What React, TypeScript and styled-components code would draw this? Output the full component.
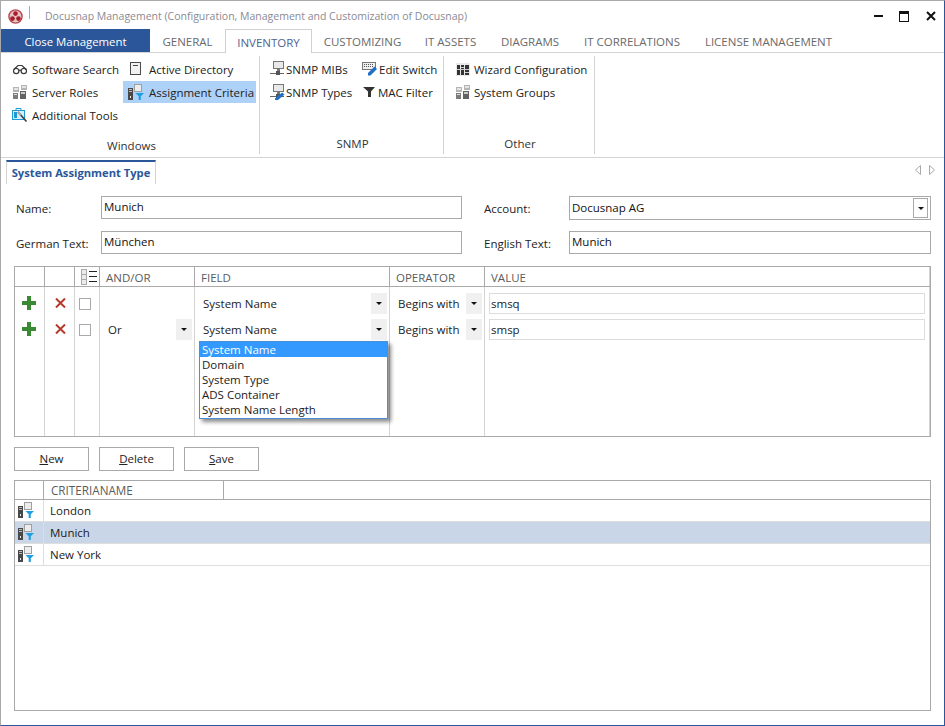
import React from "react";
import styled, { createGlobalStyle } from "styled-components";

const Global = createGlobalStyle`
  html, body { margin: 0; padding: 0; background: #fff; }
  body { font-family: "Open Sans", "Noto Sans", "Liberation Sans", sans-serif; font-size: 11.5px; color: #1a1a1a; }
  * { box-sizing: border-box; }
`;

const Window = styled.div`
  width: 945px; height: 726px; display: flex; flex-direction: column; background: #fff;
  border-top: 1px solid #a9a9a9; border-left: 1px solid #a9a9a9;
  border-right: 1px solid #2b579a; border-bottom: 1px solid #2b579a; overflow: hidden;
`;
const TitleBar = styled.header`
  height: 28px; flex: none; display: flex; align-items: center; padding: 0 8px 0 7px;
`;
const TitleDivider = styled.span`
  width: 1px; height: 13px; background: #a9a9a9; margin: -6px 15px 0 6px;
`;
const TitleText = styled.span`
  color: #8a8a94; font-size: 10.5px; margin-top: 1px;
`;
const WindowControls = styled.div`
  margin-left: auto; display: grid; grid-template-columns: 25px 27px 10px; align-items: center; margin-top: 2px;
`;
const TabBar = styled.nav`
  height: 24px; flex: none; display: flex; border-bottom: 1px solid #d4d4d4;
`;
const CloseTab = styled.button`
  width: 149px; height: 23px; border: 0; background: #2b579a; color: #fff;
  font: inherit; font-size: 11.4px; padding: 1px 0 0;
`;
const Tab = styled.div<{ $w: number; $active?: boolean }>`
  width: ${(p) => p.$w}px; height: ${(p) => (p.$active ? 24 : 23)}px; display: flex; align-items: center; justify-content: center;
  font-size: 11.5px; color: ${(p) => (p.$active ? "#4f6490" : "#6a6a6a")}; background: #fff; padding-top: 2px;
  ${(p) => (p.$active ? "border: 1px solid #d0d0d0; border-bottom: 0;" : "")}
`;
const Ribbon = styled.section`
  height: 105px; flex: none; display: flex; border-bottom: 1px solid #d4d4d4; padding-bottom: 3px;
`;
const Group = styled.div<{ $w: number; $pad: number; $labelPad: number }>`
  width: ${(p) => p.$w}px; display: flex; flex-direction: column; border-right: 1px solid #d4d4d4;
  padding: 2px 0 ${(p) => p.$labelPad}px ${(p) => p.$pad}px; margin-top: 3px;
`;
const GroupGrid = styled.div<{ $cols: string }>`
  display: grid; grid-template-columns: ${(p) => p.$cols}; grid-auto-rows: 23px; justify-content: start;
`;
const GroupLabel = styled.div<{ $shift: number }>`
  margin-top: auto; text-align: center; color: #333; font-size: 11.5px; margin-left: ${(p) => p.$shift}px; line-height: 16px;
`;
const RibbonItem = styled.div<{ $gap: number; $active?: boolean }>`
  display: flex; align-items: center; gap: ${(p) => p.$gap}px; padding-left: 5px; padding-right: 2px;
  background: ${(p) => (p.$active ? "#aed1f8" : "transparent")}; white-space: nowrap; color: #222; height: 22px; font-size: 11.5px;
`;
const DocStrip = styled.div`
  height: 26px; flex: none; display: flex; align-items: flex-start; padding: 2px 8px 0 5px; justify-content: space-between;
`;
const DocTab = styled.div`
  width: 150px; height: 24px; border: 1px solid #d4d4d4; border-bottom: 0; border-top: 2px solid #2b579a;
  display: flex; align-items: center; justify-content: center; color: #2b579a; font-weight: 700; font-size: 11.2px; padding-bottom: 2px;
`;
const DocArrows = styled.div`
  display: flex; gap: 8px; margin-top: 5px; margin-right: 1px;
`;
const Content = styled.main`
  flex: 1; display: flex; flex-direction: column; padding: 12px 13px 14px; min-height: 0;
`;
const Form = styled.div`
  display: grid; grid-template-columns: 85px 361px 22px 85px 362px; row-gap: 11px; margin-left: 2px; align-items: start;
`;
const FormLabel = styled.label<{ $col: number }>`
  grid-column: ${(p) => p.$col}; height: 23px; display: flex; align-items: center; color: #222; font-size: 11.5px; padding-top: 1px;
`;
const TextField = styled.div<{ $tall?: boolean }>`
  height: ${(p) => (p.$tall ? 24 : 23)}px; border: 1px solid #a9a9a9; display: flex; align-items: center; justify-content: space-between;
  padding: 0 1px 2px 2px; color: #111; font-size: 11.5px; position: relative;
`;
const SelectButton = styled.span`
  width: 15px; height: 20px; border: 1px solid #a9a9a9; display: flex; align-items: center; justify-content: center; margin: 2px 1px 0 0;
`;
const Caret = styled.span`
  width: 0; height: 0; border-left: 3px solid transparent; border-right: 3px solid transparent; border-top: 3px solid #111;
`;
const CriteriaGrid = styled.div`
  margin-top: 12px; height: 171px; flex: none; border: 1px solid #a9a9a9; display: grid; position: relative;
  grid-template-columns: 30px 30px 25px 95px 195px 95px 1fr; grid-template-rows: 20px 32px 26px 1fr;
  box-shadow: inset -1px 0 0 #d4d4d4;
`;
const HeadCell = styled.div`
  border-right: 1px solid #a9a9a9; border-bottom: 1px solid #a9a9a9; display: flex; align-items: center;
  padding-left: 6px; padding-top: 1px; color: #5b5b5b; font-size: 11.5px;
  &:nth-child(7) { border-right: 0; }
`;
const Cell = styled.div<{ $first?: boolean }>`
  border-right: 1px solid #d4d4d4; padding-top: ${(p) => (p.$first ? 6 : 0)}px; padding-bottom: 5px; min-width: 0;
`;
const IconCell = styled(Cell)<{ $pl: number }>`
  display: flex; padding-left: ${(p) => p.$pl}px;
`;
const LastCell = styled(Cell)` border-right: 0; padding-left: 4px; padding-right: 5px; `;
const Combo = styled.div<{ $pl: number; $pr: number }>`
  height: 21px; display: flex; align-items: center; justify-content: space-between; padding-left: ${(p) => p.$pl}px; padding-right: ${(p) => p.$pr}px; color: #222; font-size: 11.5px;
`;
const ComboArrow = styled.span`
  width: 16px; height: 21px; background: #f0f0f0; display: flex; align-items: center; justify-content: center;
`;
const ValueField = styled.div`
  height: 21px; border: 1px solid #dcdcdc; display: flex; align-items: center; padding-left: 1px; font-size: 11.5px; color: #222;
`;
const CheckBox = styled.span`
  width: 12px; height: 12px; border: 1px solid #a9a9a9; background: #fff; margin-top: 5px; margin-left: 4px;
`;
const IconWrap = styled.span<{ $mt: number }>`
  margin-top: ${(p) => p.$mt}px; display: flex;
`;
const DropList = styled.ul`
  position: absolute; left: 184px; top: 74px; width: 189px; height: 78px; margin: 0; padding: 0; list-style: none; background: #fff;
  border: 1px solid #4a90d9; box-shadow: 3px 3px 4px rgba(0,0,0,.45); font-size: 11.5px;
`;
const DropItem = styled.li<{ $selected?: boolean }>`
  height: 15px; line-height: 15px; padding-left: 2px; color: ${(p) => (p.$selected ? "#fff" : "#222")};
  background: ${(p) => (p.$selected ? "#3399ff" : "transparent")};
`;
const ButtonRow = styled.div`
  display: flex; gap: 10px; margin-top: 10px; flex: none;
`;
const ActionButton = styled.button`
  width: 75px; height: 24px; border: 1px solid #a9a9a9; background: #fff; font: inherit; font-size: 11.5px; color: #222; padding: 0 0 2px;
  u { text-underline-offset: 1px; }
`;
const ListPanel = styled.div`
  margin-top: 9px; flex: 1; border: 1px solid #a9a9a9; min-height: 0;
`;
const ListHead = styled.div`
  display: grid; grid-template-columns: 29px 180px 1fr; height: 19px; border-bottom: 1px solid #a9a9a9;
`;
const ListHeadCell = styled.div`
  border-right: 1px solid #a9a9a9; display: flex; align-items: center; padding-left: 7px; color: #5b5b5b; font-size: 11.7px;
  &:last-child { border-right: 0; }
`;
const ListRow = styled.div<{ $selected?: boolean }>`
  display: grid; grid-template-columns: 29px 1fr; height: 22px; border-bottom: 1px solid #dedede; align-items: center;
  background: ${(p) => (p.$selected ? "#c9d6e7" : "#fff")}; font-size: 11.5px; color: #1a1a1a;
`;
const ListIconCell = styled.div`
  height: 100%; border-right: 1px solid #dedede; display: flex; align-items: center; padding: 0 0 2px 3px;
`;
const ListText = styled.div`
  padding-left: 6px;
`;

const Logo = () => (
  <svg width="15" height="15" viewBox="0 0 15 15" style={{ marginTop: 2 }}>
    <circle cx="7.5" cy="7.5" r="6.6" fill="#e8c4c6" stroke="#b8474f" strokeWidth="1.4" />
    <circle cx="7.5" cy="4.6" r="2.3" fill="#a61c28" />
    <circle cx="4.5" cy="9.6" r="2.3" fill="#a61c28" />
    <circle cx="10.5" cy="9.6" r="2.3" fill="#a61c28" />
  </svg>
);
const Min = () => (
  <svg width="10" height="10" viewBox="0 0 10 10"><rect x="0" y="4" width="9" height="2" fill="#111" /></svg>
);
const Max = () => (
  <svg width="10" height="11" viewBox="0 0 10 11"><rect x="0.5" y="0.5" width="9" height="10" fill="none" stroke="#111" /><rect x="0" y="0" width="10" height="3" fill="#111" /></svg>
);
const Close = () => (
  <svg width="10" height="10" viewBox="0 0 10 10"><path d="M1 1l8 8M9 1l-8 8" stroke="#111" strokeWidth="2" /></svg>
);
const Glasses = () => (
  <svg width="16" height="16" viewBox="0 0 16 16" fill="none" stroke="#3a3a3a" strokeWidth="1.2">
    <circle cx="4.2" cy="10" r="2.7" fill="#fff" /><circle cx="11.8" cy="10" r="2.7" fill="#fff" />
    <path d="M6.8 9.5c.8-.6 1.6-.6 2.4 0M1.8 8.5L6 4.5h4l4.2 4" />
  </svg>
);
const ServerGroup = () => (
  <svg width="16" height="16" viewBox="0 0 16 16" shapeRendering="crispEdges">
    <rect x="1" y="3" width="6" height="5" fill="#b5b5b5" /><rect x="2" y="4" width="4" height="2" fill="#e4e4e4" />
    <rect x="9" y="1" width="6" height="5" fill="#b5b5b5" /><rect x="10" y="2" width="4" height="2" fill="#e4e4e4" />
    <rect x="1" y="9" width="5" height="6" fill="#7c7c7c" /><rect x="2" y="10" width="3" height="1" fill="#ddd" />
    <rect x="8" y="7" width="6" height="8" fill="#626262" /><rect x="9" y="8" width="4" height="2" fill="#ccc" />
  </svg>
);
const Toolbox = () => (
  <svg width="16" height="16" viewBox="0 0 16 16">
    <rect x="0.5" y="3.5" width="12" height="9" fill="#d8eefa" stroke="#1d9ad6" />
    <path d="M4 3.5V1.5h5v2" fill="none" stroke="#1d9ad6" />
    <rect x="2" y="5" width="3" height="6" fill="#1d9ad6" />
    <path d="M6 5l8.5 9.5" stroke="#444" strokeWidth="1.8" />
    <path d="M6 5l3 3" stroke="#aaa" strokeWidth="2.2" />
  </svg>
);
const Book = () => (
  <svg width="16" height="16" viewBox="0 0 16 16" shapeRendering="crispEdges">
    <rect x="2.5" y="1.5" width="10" height="12" fill="#f2f2f2" stroke="#4a4a4a" />
    <rect x="5" y="4" width="5" height="1" fill="#4a4a4a" />
  </svg>
);
const Criteria = () => (
  <svg width="16" height="16" viewBox="0 0 16 16">
    <rect x="6.5" y="0.5" width="7" height="7" fill="#ededed" stroke="#a0a0a0" />
    <rect x="0" y="4" width="5" height="12" fill="#484848" />
    <rect x="1" y="5" width="3" height="1" fill="#bbb" />
    <rect x="1" y="7" width="3" height="1" fill="#bbb" />
    <rect x="2" y="12" width="1" height="2" fill="#e8e8e8" />
    <path d="M7.5 9h8.5l-3.2 3.2V16h-2.1v-3.8z" fill="#1d9ee0" />
  </svg>
);
const Snmp = ({ pencil }: { pencil?: boolean }) => (
  <svg width="16" height="16" viewBox="0 0 16 16">
    <rect x="4.5" y="0.5" width="10" height="7" fill="#e9e9e9" stroke="#777" />
    <rect x="8" y="8" width="3" height="3" fill="#777" />
    <rect x="1" y="12" width="14" height="1" fill="#666" />
    <rect x="7" y="10" width="4" height="4" fill="#555" />
    {pencil && <path d="M6 14.5l7-6 2.5 2-6.5 5.5H6z" fill="#1f6fc4" />}
  </svg>
);
const KeyboardPen = () => (
  <svg width="16" height="16" viewBox="0 0 16 16">
    <rect x="0.5" y="1.5" width="13" height="7" fill="#f0f0f0" stroke="#777" />
    <path d="M2 3.5h10M2 5.5h10" stroke="#555" strokeDasharray="1 1" />
    <path d="M6 12l6.5-6.5 2.5 2.5L8.5 14.5H6z" fill="#1f6fc4" />
  </svg>
);
const Funnel = () => (
  <svg width="15" height="16" viewBox="0 0 15 16"><path d="M1 3h12L9 7.5V13H6V7.5z" fill="#333" /></svg>
);
const Columns = () => (
  <svg width="16" height="16" viewBox="0 0 16 16" shapeRendering="crispEdges">
    <rect x="1" y="2" width="14" height="13" fill="#eaeaea" />
    <rect x="2" y="4" width="3" height="10" fill="#333" /><rect x="6" y="4" width="3" height="10" fill="#333" /><rect x="10" y="4" width="4" height="10" fill="#333" />
    <rect x="2" y="8" width="12" height="1" fill="#ccc" /><rect x="6" y="6" width="3" height="1" fill="#ccc" /><rect x="10" y="11" width="4" height="1" fill="#ccc" />
  </svg>
);
const ArrowL = () => (
  <svg width="6" height="10" viewBox="0 0 6 10"><path d="M5.5.5v9L.5 5z" fill="none" stroke="#a9a9a9" /></svg>
);
const ArrowR = () => (
  <svg width="6" height="10" viewBox="0 0 6 10"><path d="M.5.5v9l5-4.5z" fill="none" stroke="#a9a9a9" /></svg>
);
const Plus = () => (
  <svg width="14" height="14" viewBox="0 0 14 14"><path d="M5 0h4v5h5v4H9v5H5V9H0V5h5z" fill="#3a8a34" /></svg>
);
const Cross = () => (
  <svg width="11" height="10" viewBox="0 0 11 10"><path d="M1 .5l9 9M10 .5l-9 9" stroke="#b33a2a" strokeWidth="2" /></svg>
);
const ColumnsPick = () => (
  <svg width="17" height="16" viewBox="0 0 17 16" shapeRendering="crispEdges">
    <rect x="0.5" y="0.5" width="5" height="15" fill="#ececec" stroke="#aaa" />
    <path d="M0 5.5h6M0 10.5h6" stroke="#aaa" />
    <path d="M8 2.5h8M8 7.5h8M8 12.5h8" stroke="#222" />
  </svg>
);

const criteriaRows = [
  { andOr: "", field: "System Name", op: "Begins with", value: "smsq" },
  { andOr: "Or", field: "System Name", op: "Begins with", value: "smsp" },
];
const tabs: [string, number][] = [["GENERAL", 75], ["INVENTORY", 87], ["CUSTOMIZING", 101], ["IT ASSETS", 75], ["DIAGRAMS", 84], ["IT CORRELATIONS", 120], ["LICENSE MANAGEMENT", 153]];

export default function App() {
  return (
    <>
      <Global />
      <Window>
        <TitleBar>
          <Logo />
          <TitleDivider />
          <TitleText>Docusnap Management (Configuration, Management and Customization of Docusnap)</TitleText>
          <WindowControls><Min /><Max /><Close /></WindowControls>
        </TitleBar>
        <TabBar>
          <CloseTab>Close Management</CloseTab>
          {tabs.map(([t, w]) => <Tab key={t} $w={w} $active={t === "INVENTORY"}>{t}</Tab>)}
        </TabBar>
        <Ribbon>
          <Group $w={259} $pad={6} $labelPad={0}>
            <GroupGrid $cols="116px auto">
              <RibbonItem $gap={4}><Glasses />Software Search</RibbonItem>
              <RibbonItem $gap={5}><Book />Active Directory</RibbonItem>
              <RibbonItem $gap={4}><ServerGroup />Server Roles</RibbonItem>
              <RibbonItem $gap={5} $active><Criteria />Assignment Criteria</RibbonItem>
              <RibbonItem $gap={4}><Toolbox />Additional Tools</RibbonItem>
            </GroupGrid>
            <GroupLabel $shift={-3}>Windows</GroupLabel>
          </Group>
          <Group $w={184} $pad={4} $labelPad={2}>
            <GroupGrid $cols="93px auto">
              <RibbonItem $gap={1}><Snmp />SNMP MIBs</RibbonItem>
              <RibbonItem $gap={1}><KeyboardPen />Edit Switch</RibbonItem>
              <RibbonItem $gap={1}><Snmp pencil />SNMP Types</RibbonItem>
              <RibbonItem $gap={1}><Funnel />MAC Filter</RibbonItem>
            </GroupGrid>
            <GroupLabel $shift={-2}>SNMP</GroupLabel>
          </Group>
          <Group $w={151} $pad={6} $labelPad={2}>
            <GroupGrid $cols="auto">
              <RibbonItem $gap={3}><Columns />Wizard Configuration</RibbonItem>
              <RibbonItem $gap={3}><ServerGroup />System Groups</RibbonItem>
            </GroupGrid>
            <GroupLabel $shift={-4}>Other</GroupLabel>
          </Group>
        </Ribbon>
        <DocStrip>
          <DocTab>System Assignment Type</DocTab>
          <DocArrows><ArrowL /><ArrowR /></DocArrows>
        </DocStrip>
        <Content>
          <Form>
            <FormLabel $col={1}>Name:</FormLabel>
            <TextField>Munich</TextField>
            <FormLabel $col={4}>Account:</FormLabel>
            <TextField $tall>Docusnap AG<SelectButton><Caret /></SelectButton></TextField>
            <FormLabel $col={1}>German Text:</FormLabel>
            <TextField>München</TextField>
            <FormLabel $col={4}>English Text:</FormLabel>
            <TextField>Munich</TextField>
          </Form>
          <CriteriaGrid>
            <HeadCell /><HeadCell />
            <HeadCell><ColumnsPick /></HeadCell>
            <HeadCell>AND/OR</HeadCell>
            <HeadCell>FIELD</HeadCell>
            <HeadCell>OPERATOR</HeadCell>
            <HeadCell>VALUE</HeadCell>
            {criteriaRows.map((r, i) => {
              const first = i === 0;
              return (
                <React.Fragment key={r.value}>
                  <IconCell $first={first} $pl={7}><IconWrap $mt={3}><Plus /></IconWrap></IconCell>
                  <IconCell $first={first} $pl={10}><IconWrap $mt={5}><Cross /></IconWrap></IconCell>
                  <IconCell $first={first} $pl={0}><CheckBox /></IconCell>
                  <Cell $first={first}>
                    {r.andOr && <Combo $pl={8} $pr={2}>{r.andOr}<ComboArrow><Caret /></ComboArrow></Combo>}
                  </Cell>
                  <Cell $first={first}><Combo $pl={8} $pr={2}>{r.field}<ComboArrow><Caret /></ComboArrow></Combo></Cell>
                  <Cell $first={first}><Combo $pl={8} $pr={2}>{r.op}<ComboArrow><Caret /></ComboArrow></Combo></Cell>
                  <LastCell $first={first}><ValueField>{r.value}</ValueField></LastCell>
                </React.Fragment>
              );
            })}
            <Cell /><Cell /><Cell /><Cell /><Cell /><Cell /><LastCell />
            <DropList>
              <DropItem $selected>System Name</DropItem>
              <DropItem>Domain</DropItem>
              <DropItem>System Type</DropItem>
              <DropItem>ADS Container</DropItem>
              <DropItem>System Name Length</DropItem>
            </DropList>
          </CriteriaGrid>
          <ButtonRow>
            <ActionButton><u>N</u>ew</ActionButton>
            <ActionButton><u>D</u>elete</ActionButton>
            <ActionButton><u>S</u>ave</ActionButton>
          </ButtonRow>
          <ListPanel>
            <ListHead>
              <ListHeadCell />
              <ListHeadCell>CRITERIANAME</ListHeadCell>
              <ListHeadCell />
            </ListHead>
            {["London", "Munich", "New York"].map((n) => (
              <ListRow key={n} $selected={n === "Munich"}>
                <ListIconCell><Criteria /></ListIconCell>
                <ListText>{n}</ListText>
              </ListRow>
            ))}
          </ListPanel>
        </Content>
      </Window>
    </>
  );
}
